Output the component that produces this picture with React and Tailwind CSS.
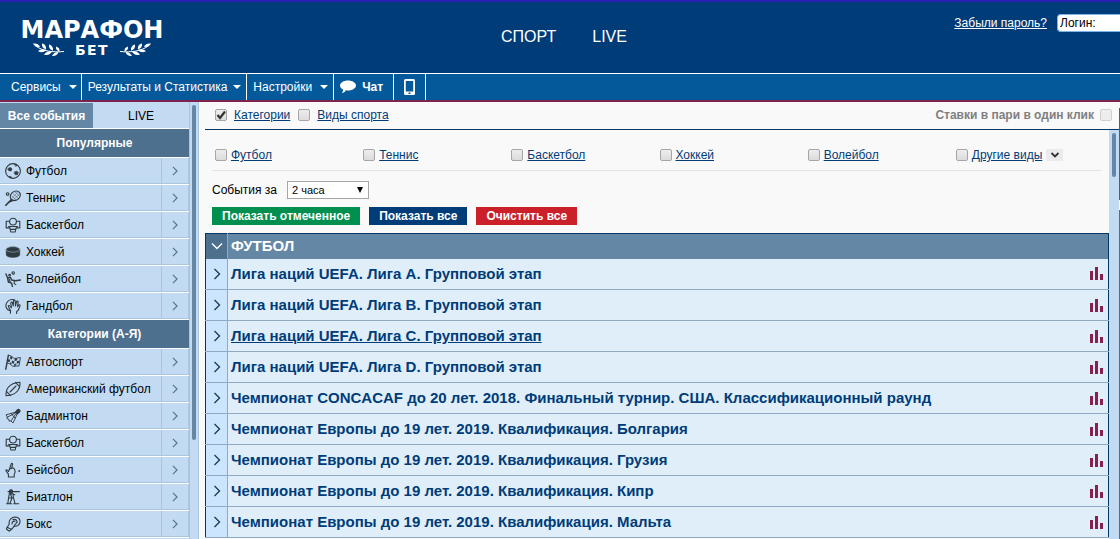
import { useState } from "react";

const popular = [
    { name: "Футбол", icon: "football" },
    { name: "Теннис", icon: "tennis" },
    { name: "Баскетбол", icon: "basketball" },
    { name: "Хоккей", icon: "hockey" },
    { name: "Волейбол", icon: "volleyball" },
    { name: "Гандбол", icon: "handball" },
];

const categories = [
    { name: "Автоспорт", icon: "motor" },
    { name: "Американский футбол", icon: "american" },
    { name: "Бадминтон", icon: "badminton" },
    { name: "Баскетбол", icon: "basketball" },
    { name: "Бейсбол", icon: "baseball" },
    { name: "Биатлон", icon: "biathlon" },
    { name: "Бокс", icon: "boxing" },
];

const sports = ["Футбол", "Теннис", "Баскетбол", "Хоккей", "Волейбол"];

const leagues = [
    "Лига наций UEFA. Лига A. Групповой этап",
    "Лига наций UEFA. Лига B. Групповой этап",
    "Лига наций UEFA. Лига C. Групповой этап",
    "Лига наций UEFA. Лига D. Групповой этап",
    "Чемпионат CONCACAF до 20 лет. 2018. Финальный турнир. США. Классификационный раунд",
    "Чемпионат Европы до 19 лет. 2019. Квалификация. Болгария",
    "Чемпионат Европы до 19 лет. 2019. Квалификация. Грузия",
    "Чемпионат Европы до 19 лет. 2019. Квалификация. Кипр",
    "Чемпионат Европы до 19 лет. 2019. Квалификация. Мальта",
];

const sportIcons = {
    football: (
        <>
            <circle cx="8" cy="8" r="7.4" />
            <path d="M3.4 5.2l2-.8 1.6 1.4-.6 2-2.2.2-1.2-1.2zM9.8 8.8l2.2-.6 1.3 1.5-.8 2-2.1.1-1.1-1.4zM9.6 1l2.6 1.500-1.400.600zM4.400 13.400l1.800.300.400 1.300-1.600-.500z" fill="#2f3a42" stroke="#2f3a42" strokeWidth="0.6" />
        </>
    ),
    tennis: (
        <>
            <ellipse cx="10.3" cy="5.8" rx="5.4" ry="4.4" transform="rotate(-40 10.3 5.8)" />
            <path d="M6.4 9.6l-1.6 1.8M.8 15.2l3.6-3.6M7.8 10.2l-2.6 1.4" strokeWidth="1.6" />
            <path d="M8 3.5l5.4 5M10 2l4.5 4M6.8 6l4.2 3.8M12.6 2l-5.4 6M14.6 3.6l-5.6 6" strokeWidth="0.4" />
            <circle cx="2.6" cy="4" r="1.3" />
        </>
    ),
    basketball: (
        <>
            <path d="M4.400 10.900H1.200V4.200h3.300M11.500 4.200h3.300v6.700h-3.200" />
            <circle cx="8" cy="4.600" r="3.400" />
            <path d="M3.600 9.500h8.800M4.600 9.800l1.200 5.200h4.400l1.200-5.200M5.600 12.400h4.800" />
        </>
    ),
    hockey: (
        <>
            <path d="M1.200 5.4v5.2c0 3.8 13.6 3.8 13.6 0V5.4z" fill="#2f3a42" strokeWidth="0.5" />
            <ellipse cx="8" cy="5.4" rx="6.9" ry="2.8" fill="#2f3a42" stroke="#9db4c7" strokeWidth="0.6" />
        </>
    ),
    volleyball: (
        <>
            <circle cx="8.2" cy="1.9" r="1.2" />
            <path d="M1 3l1.6 4 3-.6 1 2.6 4 .8 4.8-.8M2.600 7l.8 4 3.200 1.200.8 3.400" strokeWidth="1.4" />
            <path d="M4.200 8l1 3M9.200 10.400v2.200l1.600 1" />
            <circle cx="4.6" cy="4.2" r="0.9" />
        </>
    ),
    handball: (
        <>
            <path d="M5 12.600C1.500 11.800.200 8.600 1.300 5.600 2.600 2.400 6 1 9 1.700" />
            <path d="M5.400 15.200l.2-2.400-2.200-4c-.5-1.300.9-1.800 1.500-.8l1.500 1.800-.6-4.800c0-1.300 1.500-1.300 1.700 0l.8 3M8.300 8l.2-5c.2-1.200 1.600-1.200 1.700 0l.3 5 1-4.200c.4-1.100 1.700-.8 1.600.3l-.5 4.700 1-1.600c.6-.9 1.700-.3 1.400.6l-1.600 4.200-1.800 1.600v1.800" />
        </>
    ),
    motor: (
        <>
            <path d="M3.4 1.2l-2.600 14" strokeWidth="1.4" />
            <path d="M3.600 1.600c3-1 4 2.800 6.400 2.800s3-1 5.400-.8l-1.400 8.400c-3.200-.6-4 1.200-6.200.2S5 8.600 2.400 9.400" strokeWidth="0.9" />
            <path d="M5.400 2l2 1.200-.4 2.400-2-1zM9.800 4.600l2.600-.4-.4 2.400-2.600.4zM3.200 5.200l2 .2-.4 2.400-2 .2zM7 6.400l2.400 1-.4 2.400L6.600 9zM12 7l2.400-.2-.4 2.400-2.400.2zM5 8.200l1.600 1-.3 1.600L4.800 9.600zM9.200 10l2.200-.4-.3 2-2.200.4z" fill="#2f3a42" stroke="none" />
        </>
    ),
    american: (
        <>
            <path d="M1.200 14.800C.2 9.400 3.200 2 14.800 1.200 15.800 6.600 12.800 14 1.200 14.800z" />
            <path d="M1.400 10.400l4.200 4.200M10.400 1.400l4.200 4.200M5 11l6-6" />
        </>
    ),
    badminton: (
        <>
            <path d="M10.400 4.200l2-2.400c1.400-1.200 3.400.6 2.200 2.200l-2.400 2z" fill="#2f3a42" />
            <path d="M10.400 4.200L1 6.800l1.400 2.400-.6 1.200 2 .8.400 2 1.600-.4 2.200 2.200 4.200-9M10.200 5L2.400 9.200M11 5.600l-5 7.200M6 5.400l4.200 4.800" strokeWidth="0.9" />
        </>
    ),
    baseball: (
        <>
            <path d="M3.400 15v-2.800L1 9c-.5-1 .7-1.500 1.400-.7l1.200 1.200L6.200 2c.4-1 1.600-.6 1.400.4L6.600 6.600M5 6.800l3-1 1.600 1.400c.8 1.600.6 3.400-.4 5.200V15H3.400" />
            <circle cx="14.200" cy="9" r="0.9" fill="#2f3a42" stroke="none" />
        </>
    ),
    biathlon: (
        <>
            <circle cx="6" cy="2.400" r="1.600" fill="#2f3a42" />
            <path d="M3 2.600h11.400M4.400 4.200L3.600 9l-.8 5.400M7.800 4.200l.8 5L10 14.400M5.400 5l1.600 4-2 5.400M3.400 9h5M5.400 4.400l4.400 1.400M1.600 14.800h5M8.600 14.800h5.200" />
        </>
    ),
    boxing: (
        <>
            <path d="M2.200 11.200l2-3c-.8-4 2.200-7.200 6.200-7.200 3.600.2 5.200 3 4.400 5.800-.8 2.400-3 3.600-5.600 3.400L6.600 13.400z" />
            <path d="M2.200 11.200l-.8 1.800 2.600 2.200 2.600-1.800M7 8c0-2 1.200-3 3-2.800M8 3.600c2.600-.8 4.600.8 4 3.200M9.200 10.200c.4-1.600 1.600-1.800 2.400-3.800" />
        </>
    ),
};

function SportIcon({ name }) {
    return (
        <svg viewBox="0 0 16 16" className="h-4 w-4 shrink-0" fill="none" stroke="#2f3a42" strokeWidth="1.1" strokeLinecap="round" strokeLinejoin="round" aria-hidden="true">
            {sportIcons[name]}
        </svg>
    );
}

function Chevron({ className }) {
    return (
        <svg viewBox="0 0 12 12" className={className} fill="none" stroke="currentColor" strokeWidth="1.4" aria-hidden="true">
            <path d="M3.500 1l5 5-5 5" />
        </svg>
    );
}

function Laurel({ flip }) {
    return (
        <svg viewBox="0 0 32 14" className={`h-3.5 w-8 ${flip ? "-scale-x-100" : ""}`} fill="#fff" aria-hidden="true">
            <path d="M2 2.500c8 6 18 7 29 6" fill="none" stroke="#fff" strokeWidth="1" />
            <path d="M0 .5c4-.5 6 1 7 3.500-3.500.3-6-1-7-3.500zM9 .5c3 .5 4.500 3 4 6-3-1-4.500-3-4-6zM16 1.500c3 .7 4.500 3 4 6.200-3-1-4.500-3-4-6.200zM23 3.500c2.500.7 4 2.500 3.500 5-2.500-.7-4-2.500-3.500-5zM5 8c3-2 5.500-2 8-1-2 2.500-5 3-8 1zM11 11.500c2.500-3 5-3.500 8-3-1.500 3-4.500 4.500-8 3zM19 13c1.500-3 4-4.200 6.500-4-1 3-3.500 4.500-6.500 4z" />
        </svg>
    );
}

function Checkbox({ id, checked, onChange, className = "" }) {
    return (
        <span className={`relative inline-flex h-3 w-3 ${className}`}>
            <input
                id={id}
                type="checkbox"
                checked={checked}
                onChange={onChange}
                className="h-3 w-3 appearance-none rounded-xs border border-[#a6a6a6] bg-linear-to-b from-[#ededed] to-[#dcdcdc]"
            />
            {checked && (
                <svg viewBox="0 0 12 12" className="pointer-events-none absolute inset-0 h-3 w-3" fill="none" stroke="#333" strokeWidth="2.2" aria-hidden="true">
                    <path d="M2.500 6l2.500 3 5-6.500" />
                </svg>
            )}
        </span>
    );
}

function NavItem({ children, caret = true, className = "" }) {
    return (
        <button className={`flex h-full items-center border-r border-white text-white ${className}`}>
            {children}
            {caret && <span className="border-x-4 border-t-4 border-x-transparent border-t-white" />}
        </button>
    );
}

function Header() {
    return (
        <header className="shrink-0 bg-[#003c78]">
            <div className="h-0.5 bg-[#2c20b4]" />
            <div className="grid h-[71px] grid-cols-[1fr_auto_1fr] items-start">
                <a href="#home" className="mt-4 ml-5 flex w-36 flex-col items-center font-['DejaVu_Sans',sans-serif] font-bold text-white">
                    <span className="text-2xl leading-6">МАРАФОН</span>
                    <span className="flex items-center gap-2.5">
                        <Laurel />
                        <span className="text-sm leading-4 tracking-widest">БЕТ</span>
                        <Laurel flip />
                    </span>
                </a>
                <nav className="mt-[25px] flex gap-9 pl-2 text-base leading-5 text-white">
                    <a href="#sport">СПОРТ</a>
                    <a href="#live">LIVE</a>
                </nav>
                <div className="mt-3 flex items-center justify-end gap-2.5">
                    <a href="#restore" className="text-white underline">Забыли пароль?</a>
                    <input aria-label="Логин" defaultValue="Логин:" className="h-[18px] w-[63px] rounded-l border border-r-0 border-[#7db4e8] bg-white px-0.5 text-black" />
                </div>
            </div>
            <div className="flex h-[27px] items-stretch border-t border-white bg-[#04599a]">
                <NavItem className="gap-2 pr-1 pl-[11px]">Сервисы</NavItem>
                <NavItem className="gap-1.5 pr-[5px] pl-1.5">Результаты и Статистика</NavItem>
                <NavItem className="gap-2 pr-[5px] pl-1.5">Настройки</NavItem>
                <NavItem caret={false} className="gap-1.5 pr-2.5 pl-1.5 font-bold">
                    <svg viewBox="0 0 16 14" className="h-3.5 w-4" fill="#fff" aria-hidden="true">
                        <path d="M8 .5c4.400 0 8 2.200 8 5s-3.600 5-8 5c-.7 0-1.500 0-2.200-.2C5 12 3.500 13 1.800 13.200c.9-1 1.300-2.200 1.200-3.600C1.200 8.700 0 7.200 0 5.500c0-2.800 3.600-5 8-5z" />
                    </svg>
                    Чат
                </NavItem>
                <NavItem caret={false} className="px-2.5">
                    <svg viewBox="0 0 11 16" className="h-4 w-[11px]" aria-label="Мобильная версия">
                        <rect width="11" height="16" rx="1.500" fill="#fff" />
                        <rect x="1.800" y="2" width="7.400" height="10.500" fill="#04599a" />
                        <rect x="4.500" y="13.500" width="2" height="1.500" fill="#04599a" />
                    </svg>
                </NavItem>
            </div>
            <div className="h-0.5 bg-[#7e2250]" />
        </header>
    );
}

function SidebarGroup({ title, items }) {
    return (
        <section>
            <h2 className="flex h-[29px] items-center justify-center border-b border-white bg-[#4d708f] font-bold text-white">{title}</h2>
            <ul>
                {items.map((item) => (
                    <li key={item.name} className="h-[27px] border-b border-white">
                        <a href="#sport" className="flex h-[26px] items-stretch border-b border-[#a9c6de] bg-[#c2dbf2] text-black">
                            <span className="flex flex-1 items-center gap-[5px] pl-[5px]">
                                <SportIcon name={item.icon} />
                                {item.name}
                            </span>
                            <span className="flex w-7 items-center justify-center border-x border-[#a9c6de] text-[#56748c]">
                                <Chevron className="h-2.5 w-2.5" />
                            </span>
                        </a>
                    </li>
                ))}
            </ul>
        </section>
    );
}

function Sidebar() {
    return (
        <aside className="flex w-[199px] shrink-0 overflow-hidden bg-[#c2dbf2]">
            <div className="w-[189px]">
                <div className="flex h-[27px] border-b border-white pt-px">
                    <button className="w-[93px] bg-[#6487a5] font-bold text-white">Все события</button>
                    <button className="flex-1 text-black">LIVE</button>
                </div>
                <SidebarGroup title="Популярные" items={popular} />
                <SidebarGroup title="Категории (А-Я)" items={categories} />
            </div>
            <div className="flex flex-1 justify-center border-x border-[#a9c6de] pt-[3px]">
                <div className="h-[335px] w-1 rounded-full bg-[#6487a5]" />
            </div>
        </aside>
    );
}

function Filters() {
    const [selected, setSelected] = useState([]);

    const toggle = (name) =>
        setSelected((s) => (s.includes(name) ? s.filter((n) => n !== name) : [...s, name]));

    return (
        <div className="pr-2 pl-[7px]">
            <div className="grid h-[41px] grid-cols-6 items-center border-b border-[#e3e3e3] pt-2.5">
                {sports.map((name) => (
                    <div key={name} className="flex items-center gap-1 pl-[3px]">
                        <Checkbox id={name} checked={selected.includes(name)} onChange={() => toggle(name)} />
                        <label htmlFor={name} className="text-[#003c78] underline">{name}</label>
                    </div>
                ))}
                <div className="flex items-center gap-1 pl-[3px]">
                    <Checkbox id="other" checked={selected.includes("other")} onChange={() => toggle("other")} />
                    <label htmlFor="other" className="text-[#003c78] underline">Другие виды</label>
                    <button aria-label="Показать другие виды" className="flex h-3 w-[17px] items-center justify-center bg-[#ebebeb] text-[#333]">
                        <svg viewBox="0 0 10 6" className="h-1.5 w-2.5" fill="none" stroke="currentColor" strokeWidth="1.800" aria-hidden="true">
                            <path d="M1.500 1L5 4.500 8.500 1" />
                        </svg>
                    </button>
                </div>
            </div>
            <div className="mt-2.5 flex items-center gap-2.5">
                <label htmlFor="period">События за</label>
                <span className="relative inline-flex">
                    <select id="period" className="h-[18px] w-[82px] appearance-none border border-[#a6a6a6] bg-white pl-1 text-[11px] leading-4">
                        <option>2 часа</option>
                        <option>4 часа</option>
                        <option>24 часа</option>
                    </select>
                    <span className="pointer-events-none absolute top-1.5 right-1.5 border-x-[3px] border-t-[6px] border-x-transparent border-t-black" />
                </span>
            </div>
            <div className="mt-2 mb-2 flex gap-[9px] font-bold text-white">
                <button className="h-[18px] bg-[#008f4e] px-2.5">Показать отмеченное</button>
                <button className="h-[18px] bg-[#003c78] px-2.5">Показать все</button>
                <button className="h-[18px] bg-[#cb2029] px-2.5">Очистить все</button>
            </div>
        </div>
    );
}

function Leagues() {
    return (
        <table className="w-full border-collapse border border-[#003866] text-[15px] font-bold">
            <thead>
                <tr className="h-[25px] bg-[#6487a5] text-left text-white">
                    <th className="w-[22px] border-r border-[#8fabc4] bg-[#4d708f] p-0">
                        <Chevron className="mx-auto h-3 w-3 rotate-90" />
                    </th>
                    <th colSpan={2} className="px-[3px] py-0">ФУТБОЛ</th>
                </tr>
            </thead>
            <tbody>
                {leagues.map((name, i) => (
                    <tr key={name} className="h-[31px] border-b border-[#8fabc4] bg-[#dfeef8] text-[#003c78]">
                        <td className="border-r border-[#8fabc4] bg-[#cce5ff] p-0">
                            <Chevron className="mx-auto h-3 w-3 text-[#1f3d59]" />
                        </td>
                        <td className="px-[3px] py-0">
                            <a href="#league" className={i === 2 ? "underline" : "hover:underline"}>{name}</a>
                        </td>
                        <td className="w-[19px] p-0">
                            <svg viewBox="0 0 13 13" className="h-[13px] w-[13px]" fill="#86204f" aria-label="Статистика">
                                <path d="M0 4h3v9H0zM5 0h3v13H5zM10 7h3v6h-3z" />
                            </svg>
                        </td>
                    </tr>
                ))}
            </tbody>
        </table>
    );
}

function App() {
    const [mode, setMode] = useState("categories");

    return (
        <div className="flex h-screen flex-col overflow-hidden bg-[#f9f9f9] font-['Liberation_Sans',Arial,sans-serif] text-xs text-black">
            <Header />
            <div className="flex min-h-0 flex-1">
                <Sidebar />
                <main className="ml-1.5 flex min-w-0 flex-1 flex-col">
                    <div className="flex h-7 shrink-0 items-center border-b border-[#003866] pr-[7px] pb-0.5 pl-2.5">
                        <Checkbox id="by-category" checked={mode === "categories"} onChange={() => setMode("categories")} />
                        <label htmlFor="by-category" className="ml-[7px] text-[#003c78] underline">Категории</label>
                        <Checkbox id="by-sport" className="ml-2" checked={mode === "sports"} onChange={() => setMode("sports")} />
                        <label htmlFor="by-sport" className="ml-[7px] text-[#003c78] underline">Виды спорта</label>
                        <label htmlFor="one-click" className="ml-auto font-bold text-[#808080]">Ставки в пари в один клик</label>
                        <input id="one-click" type="checkbox" className="ml-1.5 h-3 w-3 appearance-none rounded-xs border border-[#d0d0d0] bg-[#ededed]" />
                    </div>
                    <div className="flex min-h-0 flex-1">
                        <div className="min-w-0 flex-1 overflow-hidden">
                            <Filters />
                            <Leagues />
                        </div>
                        <div className="flex w-2.5 justify-center bg-[#c2dbf2] pt-[3px]">
                            <div className="h-11 w-1 rounded-full bg-[#6487a5]" />
                        </div>
                    </div>
                </main>
                <div className="flex w-px flex-col gap-2.5 pt-1.5">
                    <div className="h-[92px] bg-[#008f4e]" />
                    <div className="flex-1 bg-[#4d708f]" />
                </div>
            </div>
        </div>
    );
}

export default App;
